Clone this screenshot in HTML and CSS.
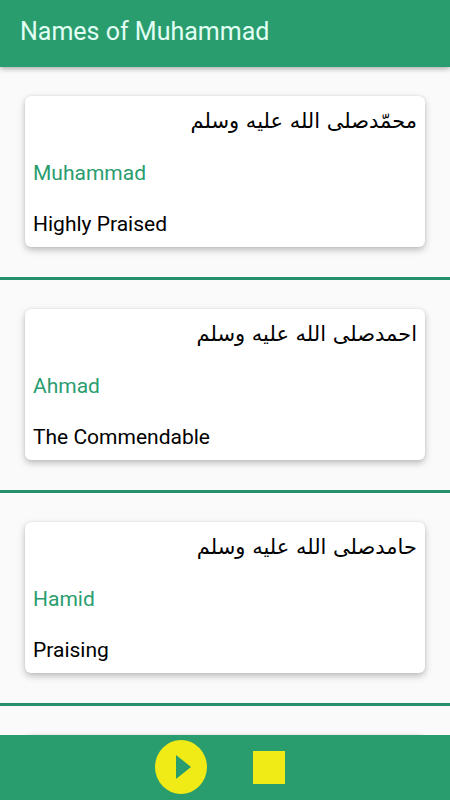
FILE: index.html
```html
<!DOCTYPE html>
<html lang="en">
    <head>
        <meta charset="utf-8">
        <meta name="viewport" content="width=device-width, initial-scale=1">
        <title>Names of Muhammad</title>
        <link rel="stylesheet" href="styles.css">
    </head>

    <body>
        <header class="toolbar">
            <h1 class="title">Names of Muhammad</h1>
        </header>

        <main class="names">
            <section class="item">
                <div class="card">
                    <p class="arabic" lang="ar" dir="rtl">محمّدصلى الله عليه وسلم</p>
                    <h2 class="name">Muhammad</h2>
                    <p class="meaning">Highly Praised</p>
                </div>
            </section>

            <section class="item">
                <div class="card">
                    <p class="arabic" lang="ar" dir="rtl">احمدصلى الله عليه وسلم</p>
                    <h2 class="name">Ahmad</h2>
                    <p class="meaning">The Commendable</p>
                </div>
            </section>

            <section class="item">
                <div class="card">
                    <p class="arabic" lang="ar" dir="rtl">حامدصلى الله عليه وسلم</p>
                    <h2 class="name">Hamid</h2>
                    <p class="meaning">Praising</p>
                </div>
            </section>

            <section class="item">
                <div class="card"></div>
            </section>
        </main>

        <footer class="player">
            <button class="control" type="button" aria-label="Play">
                <svg width="54" height="56" viewBox="0 0 54 56">
                    <ellipse cx="27" cy="28" rx="26" ry="27" fill="#f0ea16"/>
                    <path d="M22 16v24l15-12z" fill="#2a9d6f"/>
                </svg>
            </button>
            <button class="control" type="button" aria-label="Stop">
                <svg width="32" height="33" viewBox="0 0 32 33">
                    <rect width="32" height="33" fill="#f0ea16"/>
                </svg>
            </button>
        </footer>
    </body>
</html>
```

FILE: styles.css
```css
* {
    box-sizing: border-box;
}

body {
    background-color: #fafafa;
    color: #000;
    display: flex;
    flex-direction: column;
    font-family: Roboto, "Noto Sans", sans-serif;
    height: 100vh;
    margin: 0;
}

.toolbar {
    background-color: #2a9d6f;
    box-shadow: 0 1px 6px rgba(0, 0, 0, 0.4);
    flex: none;
    padding: 15px 20px 18px;
    z-index: 1;
}

.title {
    color: #e2fff3;
    font-size: 25px;
    font-weight: 400;
    line-height: 34px;
    margin: 0;
}

.names {
    flex: 1;
    min-height: 0;
    overflow-y: auto;
    scrollbar-width: none;
}

.item {
    border-bottom: 3px solid #25906a;
    padding: 29px 25px 30px;
}

.card {
    background-color: #fff;
    border-radius: 6px;
    box-shadow: 0 3px 7px rgba(0, 0, 0, 0.25), 0 0 2px rgba(0, 0, 0, 0.1);
    min-height: 151px;
    padding: 9px 8px 7px;
}

.arabic,
.name,
.meaning {
    font-size: 21px;
    font-weight: 400;
    line-height: 32px;
    margin: 0;
}

.arabic {
    font-family: "DejaVu Sans", sans-serif;
}

.name {
    color: #2a9d6f;
    margin: 20px 0 19px;
}

.player {
    align-items: center;
    background-color: #2a9d6f;
    display: flex;
    flex: none;
    gap: 45px;
    height: 65px;
    justify-content: center;
    padding: 0 11px 1px 0;
}

.control {
    background: none;
    border: none;
    cursor: pointer;
    padding: 0;
}

.control svg {
    display: block;
}
```
